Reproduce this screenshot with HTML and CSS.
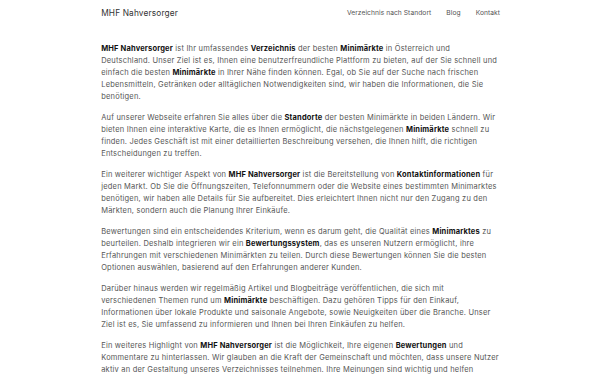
FILE: index.html
```html
<!DOCTYPE html>
<html lang="de">
<head>
    <meta charset="UTF-8">
    <meta name="viewport" content="width=device-width, initial-scale=1.0">
    <title>MHF Nahversorger</title>
    <link rel="stylesheet" href="styles.css">
</head>
<body>
    <header class="site-header">
        <div class="container header-inner">
            <a class="brand" href="#">MHF Nahversorger</a>
            <nav class="main-nav">
                <a href="#">Verzeichnis nach Standort</a>
                <a href="#">Blog</a>
                <a href="#">Kontakt</a>
            </nav>
        </div>
    </header>

    <main class="content">
        <div class="container">
            <p><strong>MHF Nahversorger</strong> ist Ihr umfassendes <strong>Verzeichnis</strong> der besten <strong>Minimärkte</strong> in Österreich und Deutschland. Unser Ziel ist es, Ihnen eine benutzerfreundliche Plattform zu bieten, auf der Sie schnell und einfach die besten <strong>Minimärkte</strong> in Ihrer Nähe finden können. Egal, ob Sie auf der Suche nach frischen Lebensmitteln, Getränken oder alltäglichen Notwendigkeiten sind, wir haben die Informationen, die Sie benötigen.</p>

            <p>Auf unserer Webseite erfahren Sie alles über die <strong>Standorte</strong> der besten Minimärkte in beiden Ländern. Wir bieten Ihnen eine interaktive Karte, die es Ihnen ermöglicht, die nächstgelegenen <strong>Minimärkte</strong> schnell zu finden. Jedes Geschäft ist mit einer detaillierten Beschreibung versehen, die Ihnen hilft, die richtigen Entscheidungen zu treffen.</p>

            <p>Ein weiterer wichtiger Aspekt von <strong>MHF Nahversorger</strong> ist die Bereitstellung von <strong>Kontaktinformationen</strong> für jeden Markt. Ob Sie die Öffnungszeiten, Telefonnummern oder die Website eines bestimmten Minimarktes benötigen, wir haben alle Details für Sie aufbereitet. Dies erleichtert Ihnen nicht nur den Zugang zu den Märkten, sondern auch die Planung Ihrer Einkäufe.</p>

            <p>Bewertungen sind ein entscheidendes Kriterium, wenn es darum geht, die Qualität eines <strong>Minimarktes</strong> zu beurteilen. Deshalb integrieren wir ein <strong>Bewertungssystem</strong>, das es unseren Nutzern ermöglicht, ihre Erfahrungen mit verschiedenen Minimärkten zu teilen. Durch diese Bewertungen können Sie die besten Optionen auswählen, basierend auf den Erfahrungen anderer Kunden.</p>

            <p>Darüber hinaus werden wir regelmäßig Artikel und Blogbeiträge veröffentlichen, die sich mit verschiedenen Themen rund um <strong>Minimärkte</strong> beschäftigen. Dazu gehören Tipps für den Einkauf, Informationen über lokale Produkte und saisonale Angebote, sowie Neuigkeiten über die Branche. Unser Ziel ist es, Sie umfassend zu informieren und Ihnen bei Ihren Einkäufen zu helfen.</p>

            <p>Ein weiteres Highlight von <strong>MHF Nahversorger</strong> ist die Möglichkeit, Ihre eigenen <strong>Bewertungen</strong> und Kommentare zu hinterlassen. Wir glauben an die Kraft der Gemeinschaft und möchten, dass unsere Nutzer aktiv an der Gestaltung unseres Verzeichnisses teilnehmen. Ihre Meinungen sind wichtig und helfen anderen Nutzern, die besten Entscheidungen zu treffen.</p>
        </div>
    </main>
</body>
</html>
```

FILE: styles.css
```css
body {
    margin: 0;
    font-family: 'Inter', 'DejaVu Sans', sans-serif;
    background: #fff;
    color: #555;
}

a {
    text-decoration: none;
}

.container {
    box-sizing: border-box;
    width: 400px;
    margin: 0 auto;
    padding-left: 1.2px;
}

/* Header */
.site-header {
    padding: 6px 0;
}

.header-inner {
    display: flex;
    align-items: center;
    justify-content: space-between;
    height: 14px;
}

.brand {
    font-size: 8.3px;
    letter-spacing: 0.15px;
    color: #333;
}

.main-nav {
    display: flex;
    gap: 15px;
}

.main-nav a {
    font-size: 6.7px;
    letter-spacing: 0.05px;
    color: #555;
}

/* Content */
.content {
    padding-top: 17px;
}

.content p {
    margin: 0 0 9px;
    font-size: 7.5px;
    line-height: 12px;
    letter-spacing: 0.2px;
}

.content strong {
    font-weight: 700;
    letter-spacing: 0.16px;
    color: #111;
}
```
